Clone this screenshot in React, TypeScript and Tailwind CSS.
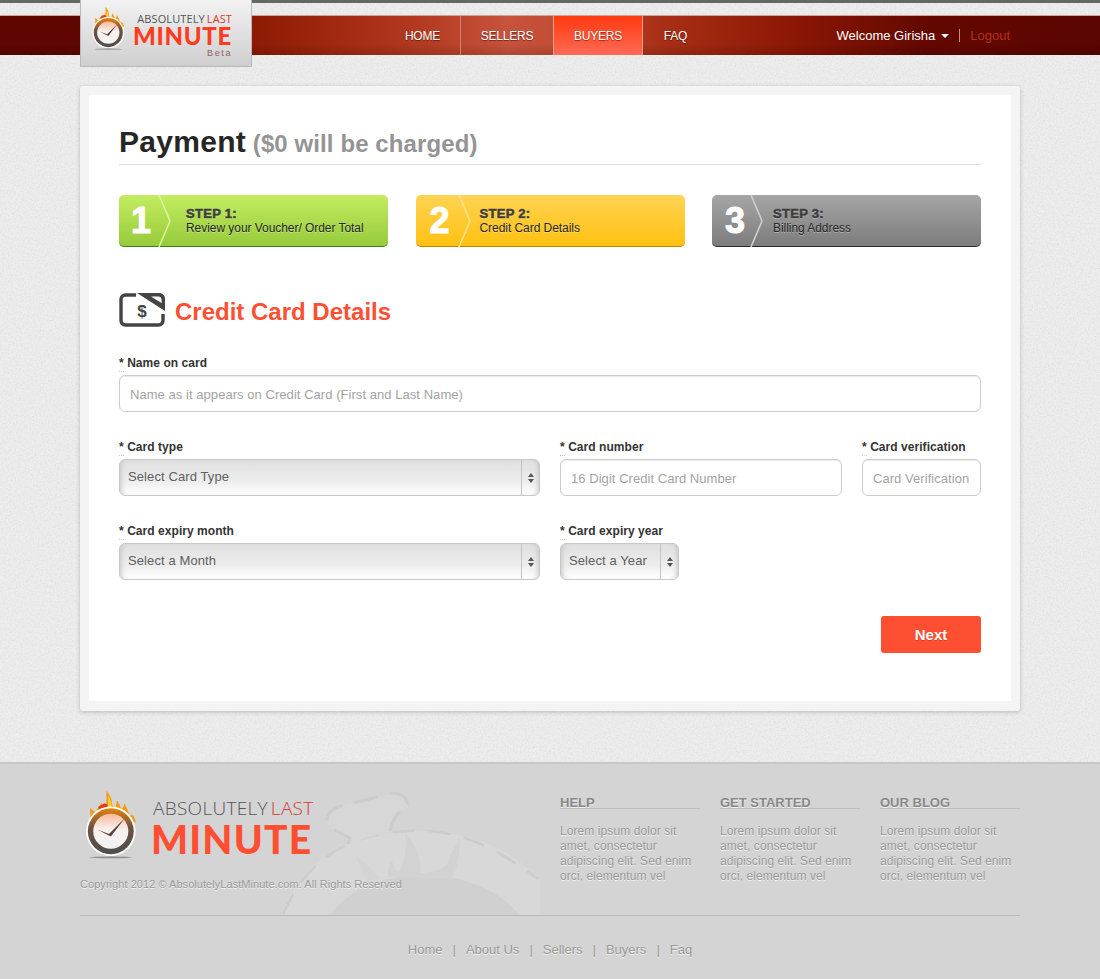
import React from "react";

const navItems = [
  { label: "HOME", width: "w-[76px]", divider: true },
  { label: "SELLERS", width: "w-[92px]", divider: false },
  { label: "BUYERS", width: "w-[90px]", active: true, divider: false },
  { label: "FAQ", width: "w-[65px]", divider: false },
];

const footerCols = ["HELP", "GET STARTED", "OUR BLOG"];
const footerLinks = ["Home", "About Us", "Sellers", "Buyers", "Faq"];

const PageNoise = () => (
  <svg className="pointer-events-none absolute inset-0 h-full w-full" aria-hidden="true">
    <filter id="paper">
      <feTurbulence type="fractalNoise" baseFrequency="0.6" numOctaves="3" seed="4" />
      <feColorMatrix values="0 0 0 0 0.6  0 0 0 0 0.6  0 0 0 0 0.6  0.5 0.5 0 0 -0.42" />
    </filter>
    <rect width="100%" height="100%" filter="url(#paper)" />
  </svg>
);

const ClockLogo = ({ className }: { className: string }) => (
  <svg viewBox="0 0 70 80" className={className} aria-hidden="true">
    <defs>
      <linearGradient id="clockFace" x1="0" y1="0" x2="0" y2="1">
        <stop offset="0" stopColor="#fbb79a" />
        <stop offset="0.45" stopColor="#f7f1ee" />
        <stop offset="1" stopColor="#f2f2f2" />
      </linearGradient>
      <linearGradient id="clockRing" x1="0" y1="0" x2="0" y2="1">
        <stop offset="0" stopColor="#e8820c" />
        <stop offset="0.4" stopColor="#6f5240" />
        <stop offset="1" stopColor="#4e4e4e" />
      </linearGradient>
    </defs>
    <path
      d="M8 38C10 31 9 27 9 22C12 25 14 26 15 27C17 22 20 19 22 16C23 20 24 22 26 22C28 14 27 8 27 3C31 8 34 12 33 18C35 21 36 22 37 22C38 19 38 17 39 14C42 18 43 22 44 24C46 22 47 19 47 17C50 22 52 27 53 31C56 28 58 31 60 38Z"
      fill="#f59a1c"
    />
    <path d="M26 26C29 19 30 14 29 9C32 13 33 17 33 24C35 22 36 20 37 19C39 22 40 25 40 28Z" fill="#fcd62a" />
    <path d="M18 21L25 17L29 19L27 23L20 25Z" fill="#e23a1c" />
    <circle cx="32" cy="48" r="27.5" fill="#ffffff" />
    <circle cx="32" cy="48" r="25.5" fill="url(#clockRing)" />
    <circle cx="32" cy="48" r="19.5" fill="url(#clockFace)" />
    <path d="M17 46L30 51L48 33L32 54Z" fill="#5a4238" />
    <ellipse cx="32" cy="77" rx="24" ry="1" fill="#8d8d8d" />
  </svg>
);

const CardIcon = () => (
  <svg viewBox="0 0 46 34" className="h-[34px] w-[46px]" aria-hidden="true">
    <path
      d="M17 2H6.5C3.8 2 2 3.8 2 6.5V27.5C2 30.2 3.8 32 6.5 32H39.5C42.2 32 44 30.2 44 27.5V21"
      fill="none"
      stroke="#444444"
      strokeWidth="3.4"
    />
    <path d="M18 0H40C43.5 0 46 2.5 46 6V18Z" fill="#444444" />
    <path d="M32 3.4H39C41.5 3.4 42.6 5 42.6 7V10Z" fill="#ffffff" />
    <text
      x="23"
      y="23.5"
      textAnchor="middle"
      className="font-['Liberation_Sans',sans-serif] text-[17px] font-bold"
      fill="#444444"
    >
      $
    </text>
  </svg>
);

const Watermark = () => (
  <svg viewBox="0 0 280 135" className="h-[135px] w-[280px]" aria-hidden="true">
    <path d="M10 135C30 90 60 65 90 58C130 44 190 48 230 68C248 78 262 90 270 100L270 135Z" fill="#d8d8d8" />
    <path
      d="M13 133C30 95 52 75 80 62C105 52 130 49 160 50C190 53 220 62 268 98"
      fill="none"
      stroke="#cccccc"
      strokeWidth="2.5"
      strokeDasharray="22 14"
    />
    <path
      d="M78 63L80 57C68 50 57 48 57 38C58 28 68 25 80 23L118 13C130 10 138 16 138 27C128 30 124 34 120 50"
      fill="#d7d7d7"
      stroke="#cccccc"
      strokeWidth="3"
      strokeDasharray="24 12"
    />
    <path d="M60 135C78 108 110 96 147 94C190 92 232 110 250 135Z" fill="#d0d0d0" />
    <path
      d="M118 96C117 88 119 84 122 80C124 86 126 90 129 91C133 84 138 70 135 52C148 66 152 82 150 92C160 92 172 90 178 82C180 72 186 66 190 56C190 72 188 86 182 98Z"
      fill="#d2d2d2"
    />
    <path d="M86 75C96 82 104 90 110 98L96 100Z" fill="#d4d4d4" />
  </svg>
);

const Step = ({
  num,
  title,
  text,
  skin,
  chevron,
  chevronPos,
  numWidth,
  textPos,
}: {
  num: string;
  title: string;
  text: string;
  skin: string;
  chevron: string;
  chevronPos: string;
  numWidth: string;
  textPos: string;
}) => (
  <div className={`relative flex h-[52px] w-[269px] items-center rounded-[5px] border-b ${skin}`}>
    <svg viewBox="0 0 14 52" className={`absolute top-0 h-[52px] w-[14px] ${chevronPos}`} aria-hidden="true">
      <path d="M1 0L12 26L1 52" fill="none" stroke={chevron} strokeWidth="1.6" />
    </svg>
    <span className={`text-center text-[36px] font-bold leading-none text-white [-webkit-text-stroke:1px_#fff] ${numWidth}`}>
      {num}
    </span>
    <div className={`pt-[1px] text-[12px] leading-[15px] tracking-[-0.05px] text-[#262626] [text-shadow:0_1px_0_rgba(255,255,255,0.35)] ${textPos}`}>
      <div className="text-[13px] font-bold tracking-[0.3px] text-[#3d3d3d] [-webkit-text-stroke:0.5px_#3d3d3d]">{title}</div>
      <div>{text}</div>
    </div>
  </div>
);

const Label = ({ text }: { text: string }) => (
  <label className="mb-[5px] block h-[16px] pt-[1px] text-[12px] font-bold leading-[16px] tracking-[0.05px] text-[#333333]">
    <span className="border-b border-dotted border-[#cccccc] pb-[1px] font-bold">*</span> {text}
  </label>
);

const TextField = ({ placeholder }: { placeholder: string }) => (
  <input
    placeholder={placeholder}
    className="h-[37px] w-full rounded-[6px] border border-[#cccccc] bg-white px-[10px] pt-[1px] text-[13px] tracking-[0.05px] shadow-[inset_0_1px_1px_rgba(0,0,0,0.08)] outline-none placeholder:text-[#a3a3a3]"
  />
);

const SelectBox = ({ text }: { text: string }) => (
  <div className="flex h-[37px] w-full items-center rounded-[6px] border border-[#c8c8c8] bg-[linear-gradient(#dfdfdf,#ededed_60%,#ffffff)] shadow-[inset_5px_0_5px_-4px_#c4c4c4,inset_-5px_0_5px_-4px_#c4c4c4]">
    <span className="flex-1 pb-[1px] pl-[8px] text-[13px] tracking-[0.1px] text-[#5f5f5f]">{text}</span>
    <span className="flex h-full w-[18px] flex-col items-center justify-center gap-[2px] border-l border-[#c4c4c4]">
      <span className="h-0 w-0 border-x-[3.5px] border-b-[4px] border-x-transparent border-b-[#555555]" />
      <span className="h-0 w-0 border-x-[3.5px] border-t-[4px] border-x-transparent border-t-[#555555]" />
    </span>
  </div>
);

const App = () => {
  return (
    <div className="relative h-[979px] overflow-hidden bg-[#ededed] font-['Liberation_Sans',Arial,sans-serif]">
      <PageNoise />

      {/* Header */}
      <header className="relative">
        <div className="h-[3px] bg-[#666666]" />
        <div className="h-[12px]" />
        <div className="h-[40px] border-t border-[#c9a59b] bg-[linear-gradient(rgba(0,0,0,0)_70%,rgba(0,0,0,0.14)),linear-gradient(90deg,#5f0600_0,#5f0600_9%,#8f1c06_24%,#a52c12_32%,#b73f26_40%,#c7533c_46%,#c24c34_52%,#a93016_60%,#8c1705_72%,#640800_84%,#5a0500_100%)]">
          <div className="mx-auto flex h-full w-[940px] items-center pl-[305px] pr-[10px]">
            <nav className="flex h-full">
              {navItems.map((item) => (
                <a
                  key={item.label}
                  className={`flex h-full items-center justify-center text-[12px] tracking-[-0.2px] text-white [text-shadow:0_1px_1px_rgba(0,0,0,0.45)] ${item.width} ${
                    item.active
                      ? "border-x border-[#e0a091] bg-[linear-gradient(#ff3a0f,#ff6a55)]"
                      : ""
                  } ${item.divider ? "border-r border-[#cf8271]" : ""}`}
                >
                  {item.label}
                </a>
              ))}
            </nav>
            <div className="ml-auto flex items-center text-[13px] text-white">
              <span>Welcome Girisha</span>
              <span className="ml-[6px] h-0 w-0 border-x-[4px] border-t-[4px] border-x-transparent border-t-white" />
              <span className="ml-[10px] h-[13px] w-px bg-[#c98a7e]" />
              <a className="ml-[10px] text-[#b0331f]">Logout</a>
            </div>
          </div>
        </div>

        <div className="absolute left-[80px] top-0 flex h-[67px] w-[172px] border border-t-0 border-[#b9b9b9] bg-[linear-gradient(#f2f2f2,#cfcfcf)] pl-[9px] pt-[5px]">
          <ClockLogo className="h-[46px] w-[40px]" />
          <div className="ml-[1px] flex w-[101px] flex-col items-end pt-[7px] leading-none">
            <div className="h-[13px] font-['Open_Sans',sans-serif] text-[11px] leading-[13px] tracking-[0.1px] text-[#555555]">
              ABSOLUTELY<span className="ml-[2px] text-[#d23b30]">LAST</span>
            </div>
            <div className="h-[21px] font-['Lato',sans-serif] text-[24px] font-black leading-[21px] tracking-[0.7px] text-[#ff3c1f]">
              MINUTE
            </div>
            <div className="mt-[2px] text-[9px] leading-[10px] tracking-[1.6px] text-[#8f6060]">Beta</div>
          </div>
        </div>
      </header>

      {/* Payment card */}
      <main className="relative mx-auto mt-[31px] h-[625px] w-[940px] rounded-[3px] bg-[#f4f4f4] p-[9px] shadow-[0_1px_4px_rgba(0,0,0,0.22)]">
        <div className="h-[606px] bg-white px-[30px] pt-[30px]">
          <h1 className="h-[40px] border-b border-[#dddddd] text-[30px] font-bold leading-[34px] tracking-[0.3px] text-[#262626]">
            Payment{" "}
            <span className="ml-[-2px] text-[24px] tracking-[0.1px] text-[#949494]">($0 will be charged)</span>
          </h1>

          <div className="mt-[30px] flex justify-between">
            <Step
              num="1"
              title="STEP 1:"
              text="Review your Voucher/ Order Total"
              skin="border-[#3f7d0c] bg-[linear-gradient(#c4ec60,#96cb3c)]"
              chevron="#dcf59a"
              chevronPos="left-[39px]"
              numWidth="w-[44px]"
              textPos="ml-[23px]"
            />
            <Step
              num="2"
              title="STEP 2:"
              text="Credit Card Details"
              skin="border-[#c97e00] bg-[linear-gradient(#ffd453,#ffc010)]"
              chevron="#ffe290"
              chevronPos="left-[42px]"
              numWidth="w-[48px]"
              textPos="ml-[16px]"
            />
            <Step
              num="3"
              title="STEP 3:"
              text="Billing Address"
              skin="border-[#2b2b2b] bg-[linear-gradient(#a6a6a6,#7c7c7c)]"
              chevron="#cfcfcf"
              chevronPos="left-[38px]"
              numWidth="w-[46px]"
              textPos="ml-[15px]"
            />
          </div>

          <div className="mt-[46px] flex h-[34px] items-center gap-[10px]">
            <CardIcon />
            <h2 className="pt-[3px] text-[24px] font-bold text-[#ff4f33]">Credit Card Details</h2>
          </div>

          <div className="mt-[27px]">
            <Label text="Name on card" />
            <TextField placeholder="Name as it appears on Credit Card (First and Last Name)" />
          </div>

          <div className="mt-[26px] flex gap-[20px]">
            <div className="w-[421px]">
              <Label text="Card type" />
              <SelectBox text="Select Card Type" />
            </div>
            <div className="w-[282px]">
              <Label text="Card number" />
              <TextField placeholder="16 Digit Credit Card Number" />
            </div>
            <div className="w-[119px]">
              <Label text="Card verification" />
              <TextField placeholder="Card Verification" />
            </div>
          </div>

          <div className="mt-[26px] flex gap-[20px]">
            <div className="w-[421px]">
              <Label text="Card expiry month" />
              <SelectBox text="Select a Month" />
            </div>
            <div className="w-[119px]">
              <Label text="Card expiry year" />
              <SelectBox text="Select a Year" />
            </div>
          </div>

          <div className="mt-[36px] flex justify-end">
            <button className="h-[37px] w-[100px] rounded-[3px] bg-[#ff4f33] pt-[1px] text-[15px] font-bold text-white [text-shadow:0_1px_1px_rgba(0,0,0,0.2)]">
              Next
            </button>
          </div>
        </div>
      </main>

      {/* Footer */}
      <footer className="relative mt-[51px] h-[217px] border-t-2 border-[#c6c6c6] bg-[#d4d4d4]">
        <div className="relative mx-auto w-[940px]">
          <div className="absolute left-[190px] top-[17px]">
            <Watermark />
          </div>

          <div className="relative flex h-[152px] border-b border-[#b9b9b9]">
            <div className="w-[480px] pt-[24px]">
              <div className="flex h-[72px] pl-[2px]">
                <ClockLogo className="h-[72px] w-[63px]" />
                <div className="ml-[6px] w-[166px] pt-[7px] leading-none">
                  <div className="h-[26px] pl-[2px] font-['Open_Sans',sans-serif] text-[19px] font-light leading-[26px] tracking-[0.3px] text-[#555555]">
                    ABSOLUTELY<span className="ml-[3px] text-[#d23b30]">LAST</span>
                  </div>
                  <div className="font-['Lato',sans-serif] text-[39px] font-black leading-[37px] tracking-[1.2px] text-[#ff4f33]">
                    MINUTE
                  </div>
                </div>
              </div>
              <p className="mt-[17px] text-[11px] leading-[14px] tracking-[0.05px] text-[#999999] [text-shadow:0_1px_0_#f2f2f2]">
                Copyright 2012 © AbsolutelyLastMinute.com. All Rights Reserved
              </p>
            </div>

            <div className="flex gap-[20px] pt-[31px]">
              {footerCols.map((col) => (
                <div key={col} className="w-[140px]">
                  <h4 className="h-[14px] border-b border-[#bdbdbd] text-[13px] font-bold leading-[15px] text-[#888888] [text-shadow:0_1px_0_#f0f0f0]">
                    {col}
                  </h4>
                  <p className="mt-[15px] text-[12px] leading-[15px] tracking-[0.08px] text-[#999999] [text-shadow:0_1px_0_#f0f0f0]">
                    Lorem ipsum dolor sit amet, consectetur adipiscing elit. Sed enim orci, elementum vel
                  </p>
                </div>
              ))}
            </div>
          </div>

          <div className="mt-[26px] flex justify-center gap-[10px] text-[13px] leading-[16px] text-[#999999] [text-shadow:0_1px_0_#f0f0f0]">
            {footerLinks.map((link, i) => (
              <React.Fragment key={link}>
                {i > 0 && <span>|</span>}
                <a>{link}</a>
              </React.Fragment>
            ))}
          </div>
        </div>
      </footer>
    </div>
  );
};

export default App;
